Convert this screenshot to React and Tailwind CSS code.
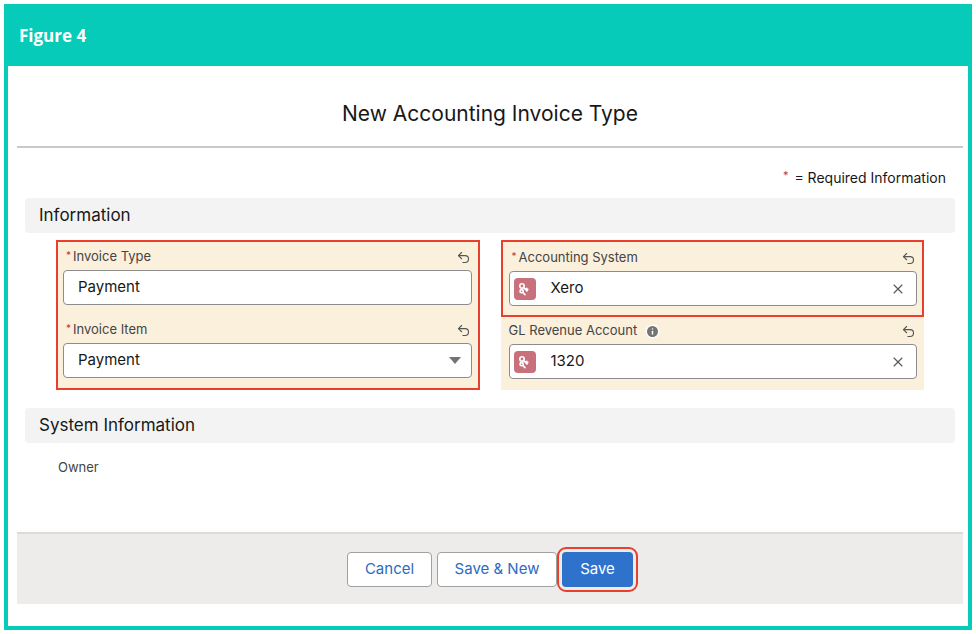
import { Undo2, X, Info } from "lucide-react";

function KeyBadge() {
  return (
    <div className="w-[22px] h-[22px] rounded-[4px] bg-[#c8707c] flex items-center justify-center shrink-0">
      <svg width="14" height="14" viewBox="0 0 14 14" fill="none" stroke="white" strokeWidth="1.6" strokeLinecap="round">
        <circle cx="4" cy="4" r="2.2" />
        <path d="M5.5 5.5 9 9M7.5 7.5l1.2-1.2M8.6 8.6l1.2-1.2" />
        <circle cx="3.6" cy="9.2" r="1.6" />
        <path d="M4.8 10.4 7 12.6" />
      </svg>
    </div>
  );
}

function FieldLabel({ text, required, info }) {
  return (
    <div className="h-[20px] mb-[3px] flex items-center justify-between pl-[3px] pr-[1px]">
      <div className="flex items-center text-[13px] text-[#444444]">
        {required && <span className="text-[#c23934] text-[10px] mr-[2px] -mt-[4px]">*</span>}
        <span>{text}</span>
        {info && (
          <span className="ml-[10px] w-[14px] h-[14px] rounded-full bg-[#747474] flex items-center justify-center text-white text-[10px] font-bold">
            i
          </span>
        )}
      </div>
      <Undo2 size={15} strokeWidth={1.8} className="text-[#555555]" />
    </div>
  );
}

function TextInput({ value, select }) {
  return (
    <div className="h-[35px] bg-white border border-[#8c8c8c] rounded-[4px] flex items-center justify-between pl-[14px] pr-[10px] text-[15px] text-[#181818]">
      <span>{value}</span>
      {select && (
        <svg width="12" height="7" viewBox="0 0 12 7">
          <path d="M0 0h12L6 7z" fill="#747474" />
        </svg>
      )}
    </div>
  );
}

function LookupInput({ value }) {
  return (
    <div className="h-[35px] bg-white border border-[#8c8c8c] rounded-[4px] flex items-center pl-[4px] pr-[10px] text-[15px] text-[#181818]">
      <KeyBadge />
      <span className="ml-[15px] flex-1">{value}</span>
      <X size={16} strokeWidth={1.6} className="text-[#555555]" />
    </div>
  );
}

function SectionHeader({ title }) {
  return (
    <div className="mx-[8px] h-[35px] bg-[#f3f3f3] rounded-[4px] flex items-center pl-[14px] text-[17px] text-[#181818]">
      {title}
    </div>
  );
}

export default function App() {
  return (
    <div className="w-[976px] h-[634px] bg-white p-[4px]" style={{ fontFamily: "Inter, 'Liberation Sans', sans-serif" }}>
      <div className="h-[626px] bg-[#05cbb8] px-[4px] pb-[4px] flex flex-col">
        <div className="h-[62px] flex items-center pl-[11px] pt-[1px]">
          <span className="text-white text-[17px] font-bold" style={{ fontFamily: "'Open Sans', sans-serif" }}>
            Figure 4
          </span>
        </div>
        <div className="flex-1 bg-white pl-[9px] pr-[5px] pb-[22px] flex flex-col">
          <div className="pt-[34px] pb-[18px] border-b-2 border-[#c9c9c9]">
            <h1 className="text-center text-[21px] leading-[28px] text-[#181818]">New Accounting Invoice Type</h1>
          </div>

          <div className="mt-[19px] h-[20px] flex items-center justify-end pr-[17px] text-[14px] text-[#181818]">
            <span className="text-[#c23934] text-[11px] mr-[6px] -mt-[3px]">*</span>
            <span>= Required Information</span>
          </div>

          <div className="mt-[11px]">
            <SectionHeader title="Information" />
          </div>

          <div className="mt-[7px] px-[39px] grid grid-cols-2 gap-[21px]">
            <div className="border-2 border-[#e8402d] bg-[#fbf0dc] pl-[5px] pr-[6px] pt-[5px] pb-[9px]">
              <FieldLabel text="Invoice Type" required />
              <TextInput value="Payment" />
              <div className="mt-[15px]">
                <FieldLabel text="Invoice Item" required />
                <TextInput value="Payment" select />
              </div>
            </div>
            <div className="flex flex-col">
              <div className="border-2 border-[#e8402d] bg-[#fbf0dc] pl-[6px] pr-[5px] pt-[6px] pb-[9px]">
                <FieldLabel text="Accounting System" required />
                <LookupInput value="Xero" />
              </div>
              <div className="bg-[#fbf0dc] pl-[8px] pr-[7px] pt-[4px] pb-[11px]">
                <div className="h-[20px] mb-[3px] flex items-center justify-between pr-[1px]">
                  <div className="flex items-center text-[13px] text-[#444444]">
                    <span>GL Revenue Account</span>
                    <Info size={15} className="ml-[8px] text-white fill-[#747474]" strokeWidth={2.4} />
                  </div>
                  <Undo2 size={15} strokeWidth={1.8} className="text-[#555555]" />
                </div>
                <LookupInput value="1320" />
              </div>
            </div>
          </div>

          <div className="mt-[18px]">
            <SectionHeader title="System Information" />
          </div>

          <div className="mt-[16px] pl-[41px] h-[18px] flex items-center text-[13px] text-[#444444]">Owner</div>

          <div className="flex-1" />

          <div className="h-[72px] bg-[#edeceb] border-t-2 border-[#dddbda] flex items-center justify-center gap-[5px]">
            <button className="h-[35px] w-[85px] bg-white border border-[#a0a0a0] rounded-[4px] text-[15px] text-[#2e6ac2]">
              Cancel
            </button>
            <button className="h-[35px] w-[120px] bg-white border border-[#a0a0a0] rounded-[4px] text-[15px] text-[#2e6ac2]">
              Save &amp; New
            </button>
            <button className="h-[35px] w-[71px] bg-[#2f72cb] rounded-[4px] text-[15px] text-white outline-2 outline-[#e8402d] outline-offset-[3px]">
              Save
            </button>
          </div>
        </div>
      </div>
    </div>
  );
}
